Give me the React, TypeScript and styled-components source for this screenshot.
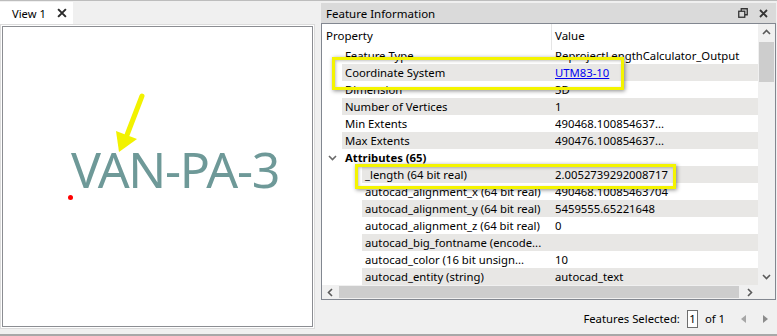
import React from "react";
import styled, { createGlobalStyle } from "styled-components";

const GlobalStyle = createGlobalStyle`
  html, body {
    margin: 0;
    padding: 0;
    background: #f0f0f0;
  }
  body {
    font-family: "Noto Sans", "DejaVu Sans", sans-serif;
    font-size: 11px;
    color: #000;
  }
`;

const Page = styled.div`
  width: 777px;
  height: 336px;
  box-sizing: border-box;
  border-top: 1px solid #bdbdbd;
  border-bottom: 2px solid #a8a8a8;
  background: #f0f0f0;
  display: flex;
  gap: 6px;
  overflow: hidden;
`;

/* ---------- left: map view ---------- */

const LeftPane = styled.div`
  width: 315px;
  margin-top: 1px;
  display: flex;
  flex-direction: column;
`;

const TabStrip = styled.div`
  height: 22px;
  display: flex;
`;

const Tab = styled.div`
  width: 73px;
  box-sizing: border-box;
  padding-left: 12px;
  background: #fff;
  display: flex;
  align-items: center;
  gap: 11px;
  font-size: 11.2px;
`;

const Frame = styled.div`
  height: 305px;
  box-sizing: border-box;
  border: 1px solid #dcdcdc;
  background: #fff;
  padding: 1px;
  display: flex;
`;

const Canvas = styled.div`
  flex: 1;
  position: relative;
  border: 1px solid #8b8d92;
  background: #fff;
  overflow: hidden;
`;

const MapLabel = styled.div`
  position: absolute;
  left: 68px;
  top: 117px;
  font-family: "Noto Sans", sans-serif;
  font-size: 50px;
  line-height: 50px;
  letter-spacing: -1.3px;
  color: #6e9998;
  white-space: nowrap;
`;

const MapPoint = styled.div`
  position: absolute;
  left: 65px;
  top: 168px;
  width: 5px;
  height: 5px;
  border-radius: 50%;
  background: #ff0000;
`;

const Overlay = styled.svg`
  position: absolute;
  left: 0;
  top: 0;
  width: 100%;
  height: 100%;
  pointer-events: none;
`;

/* ---------- right: feature information ---------- */

const RightPane = styled.div`
  width: 455px;
  margin-top: 2px;
  display: flex;
  flex-direction: column;
  position: relative;
`;

const TitleBar = styled.div`
  height: 20px;
  box-sizing: border-box;
  background: #dadada;
  display: flex;
  align-items: center;
  padding: 0 8px 0 5px;
  font-size: 11.5px;
`;

const TitleText = styled.span`
  flex: 1;
`;

const TitleIcons = styled.div`
  display: flex;
  align-items: center;
  gap: 11px;
`;

const TreeBox = styled.div`
  height: 277px;
  box-sizing: border-box;
  border: 1px solid #828790;
  background: #fff;
  display: grid;
  grid-template-columns: 1fr 17px;
  grid-template-rows: 1fr 14px;
`;

const TreeBody = styled.div`
  overflow: hidden;
`;

const HeaderRow = styled.div`
  position: relative;
  z-index: 1;
  height: 26px;
  background: #fff;
  display: grid;
  grid-template-columns: 230px 1fr;
  font-size: 11.5px;
`;

const HeaderCell = styled.div<{ $divider?: boolean }>`
  padding: 4px 0 0 ${(p) => (p.$divider ? 4 : 3)}px;
  line-height: 15px;
  border-right: ${(p) => (p.$divider ? "1px solid #e5e5e5" : "none")};
`;

const Rows = styled.div`
  margin-top: -3px;
`;

const Row = styled.div`
  height: 17px;
  display: flex;
`;

const Gutter = styled.div<{ $w: number }>`
  width: ${(p) => p.$w}px;
  flex: none;
  display: flex;
  align-items: center;
  justify-content: center;
`;

const Stripe = styled.div<{ $indent: number; $striped: boolean; $bold?: boolean }>`
  flex: 1;
  display: grid;
  grid-template-columns: ${(p) => 233 - p.$indent}px 1fr;
  background: ${(p) => (p.$striped ? "#e8e7e5" : "transparent")};
  line-height: 17px;
  font-size: 11.3px;
  font-weight: ${(p) => (p.$bold ? 700 : 400)};
  white-space: nowrap;
`;

const PropCell = styled.div`
  padding-left: 3px;
  overflow: hidden;
`;

const ValueCell = styled.div`
  overflow: hidden;
`;

const Link = styled.span`
  color: #0000f0;
  text-decoration: underline;
`;

const VScroll = styled.div`
  background: #f0f0f0;
  display: flex;
  flex-direction: column;
`;

const HScroll = styled.div`
  background: #f0f0f0;
  display: flex;
`;

const Corner = styled.div`
  background: #f0f0f0;
`;

const ArrowBox = styled.div<{ $size?: number }>`
  width: 17px;
  height: ${(p) => p.$size ?? 17}px;
  flex: none;
  display: flex;
  align-items: center;
  justify-content: center;
`;

const VThumb = styled.div`
  height: 40px;
  margin: 1px 1px 0;
  background: #cdcdcd;
`;

const HThumb = styled.div`
  width: 400px;
  margin: 1px 0;
  background: #cdcdcd;
`;

const Filler = styled.div`
  flex: 1;
`;

const StatusBar = styled.div`
  flex: 1;
  display: flex;
  align-items: center;
  justify-content: flex-end;
  padding: 3px 8px 0 0;
  font-size: 11.3px;
`;

const PageBox = styled.span`
  width: 11px;
  height: 18px;
  margin-left: 7px;
  box-sizing: border-box;
  border: 1px solid #6e6e6e;
  background: #fff;
  display: inline-flex;
  align-items: center;
  justify-content: center;
`;

const OfText = styled.span`
  margin-left: 7px;
`;

const NavArrows = styled.div`
  display: flex;
  gap: 17px;
  margin-left: 16px;
`;

const Highlight = styled.div<{ $x: number; $y: number; $w: number; $h: number }>`
  position: absolute;
  left: ${(p) => p.$x}px;
  top: ${(p) => p.$y}px;
  width: ${(p) => p.$w}px;
  height: ${(p) => p.$h}px;
  box-sizing: border-box;
  border: 3px solid #f4f400;
  box-shadow: 1px 1px 4px rgba(0, 0, 0, 0.45), inset 1px 1px 3px rgba(0, 0, 0, 0.25);
  pointer-events: none;
`;

/* ---------- icons ---------- */

const Chevron = ({ dir, color = "#5a5a5a" }: { dir: "up" | "down" | "left" | "right"; color?: string }) => {
  const pts = {
    up: "1,6 4.5,2.5 8,6",
    down: "1,3 4.5,6.5 8,3",
    left: "6,1 2.5,4.5 6,8",
    right: "3,1 6.5,4.5 3,8",
  }[dir];
  return (
    <svg width="9" height="9" viewBox="0 0 9 9">
      <polyline points={pts} fill="none" stroke={color} strokeWidth="1.6" />
    </svg>
  );
};

const Triangle = ({ dir, color }: { dir: "left" | "right"; color: string }) => (
  <svg width="5" height="8" viewBox="0 0 5 8">
    <polygon points={dir === "left" ? "5,0 0,4 5,8" : "0,0 5,4 0,8"} fill={color} />
  </svg>
);

const CloseX = ({ size = 9, color = "#333" }: { size?: number; color?: string }) => (
  <svg width={size} height={size} viewBox="0 0 9 9">
    <path d="M1 1 L8 8 M8 1 L1 8" stroke={color} strokeWidth="1.8" />
  </svg>
);

const RestoreIcon = () => (
  <svg width="10" height="10" viewBox="0 0 10 10">
    <rect x="0.75" y="3.25" width="6" height="6" fill="none" stroke="#333" strokeWidth="1.3" />
    <path d="M3.25 3 V0.75 H9.25 V6.75 H7" fill="none" stroke="#333" strokeWidth="1.3" />
  </svg>
);

type Item = {
  prop: string;
  value?: React.ReactNode;
  indent: number;
  group?: boolean;
};

const items: Item[] = [
  { prop: "Feature Type", value: "ReprojectLengthCalculator_Output", indent: 20 },
  { prop: "Coordinate System", value: <Link>UTM83-10</Link>, indent: 20 },
  { prop: "Dimension", value: "3D", indent: 20 },
  { prop: "Number of Vertices", value: "1", indent: 20 },
  { prop: "Min Extents", value: "490468.100854637...", indent: 20 },
  { prop: "Max Extents", value: "490476.100854637...", indent: 20 },
  { prop: "Attributes (65)", indent: 20, group: true },
  { prop: "_length (64 bit real)", value: "2.0052739292008717", indent: 40 },
  { prop: "autocad_alignment_x (64 bit real)", value: "490468.10085463704", indent: 40 },
  { prop: "autocad_alignment_y (64 bit real)", value: "5459555.65221648", indent: 40 },
  { prop: "autocad_alignment_z (64 bit real)", value: "0", indent: 40 },
  { prop: "autocad_big_fontname (encode...", value: "", indent: 40 },
  { prop: "autocad_color (16 bit unsign...", value: "10", indent: 40 },
  { prop: "autocad_entity (string)", value: "autocad_text", indent: 40 },
];

export default function App() {
  return (
    <>
      <GlobalStyle />
      <Page>
        <LeftPane>
          <TabStrip>
            <Tab>
              View 1
              <CloseX size={10} color="#2b2b2b" />
            </Tab>
          </TabStrip>
          <Frame>
            <Canvas>
              <MapLabel>VAN-PA-3</MapLabel>
              <MapPoint />
              <Overlay>
                <line x1="139" y1="69" x2="124" y2="108" stroke="#f2f200" strokeWidth="5" strokeLinecap="round" />
                <polygon points="116,125 113,104 134,112" fill="#f2f200" />
              </Overlay>
            </Canvas>
          </Frame>
        </LeftPane>

        <RightPane>
          <TitleBar>
            <TitleText>Feature Information</TitleText>
            <TitleIcons>
              <RestoreIcon />
              <CloseX size={9} color="#333" />
            </TitleIcons>
          </TitleBar>
          <TreeBox>
            <TreeBody>
              <HeaderRow>
                <HeaderCell $divider>Property</HeaderCell>
                <HeaderCell>Value</HeaderCell>
              </HeaderRow>
              <Rows>
                {items.map((it, i) => (
                  <Row key={it.prop}>
                    {it.group ? (
                      <>
                        <Gutter $w={20}>
                          <Chevron dir="down" color="#6a6a6a" />
                        </Gutter>
                        <Stripe $indent={20} $striped={false} $bold>
                          <PropCell>{it.prop}</PropCell>
                          <ValueCell />
                        </Stripe>
                      </>
                    ) : (
                      <>
                        <Gutter $w={it.indent} />
                        <Stripe $indent={it.indent} $striped={i % 2 === 1}>
                          <PropCell>{it.prop}</PropCell>
                          <ValueCell>{it.value}</ValueCell>
                        </Stripe>
                      </>
                    )}
                  </Row>
                ))}
              </Rows>
            </TreeBody>
            <VScroll>
              <ArrowBox>
                <Chevron dir="up" />
              </ArrowBox>
              <VThumb />
              <Filler />
              <ArrowBox>
                <Chevron dir="down" />
              </ArrowBox>
            </VScroll>
            <HScroll>
              <ArrowBox $size={14}>
                <Chevron dir="left" />
              </ArrowBox>
              <HThumb />
              <Filler />
              <ArrowBox $size={14}>
                <Chevron dir="right" />
              </ArrowBox>
            </HScroll>
            <Corner />
          </TreeBox>
          <StatusBar>
            Features Selected:
            <PageBox>1</PageBox>
            <OfText>of 1</OfText>
            <NavArrows>
              <Triangle dir="left" color="#a6a6a6" />
              <Triangle dir="right" color="#8c8c8c" />
            </NavArrows>
          </StatusBar>
          <Highlight $x={11} $y={54} $w={292} $h={33} />
          <Highlight $x={34} $y={161} $w={321} $h={25} />
        </RightPane>
      </Page>
    </>
  );
}
